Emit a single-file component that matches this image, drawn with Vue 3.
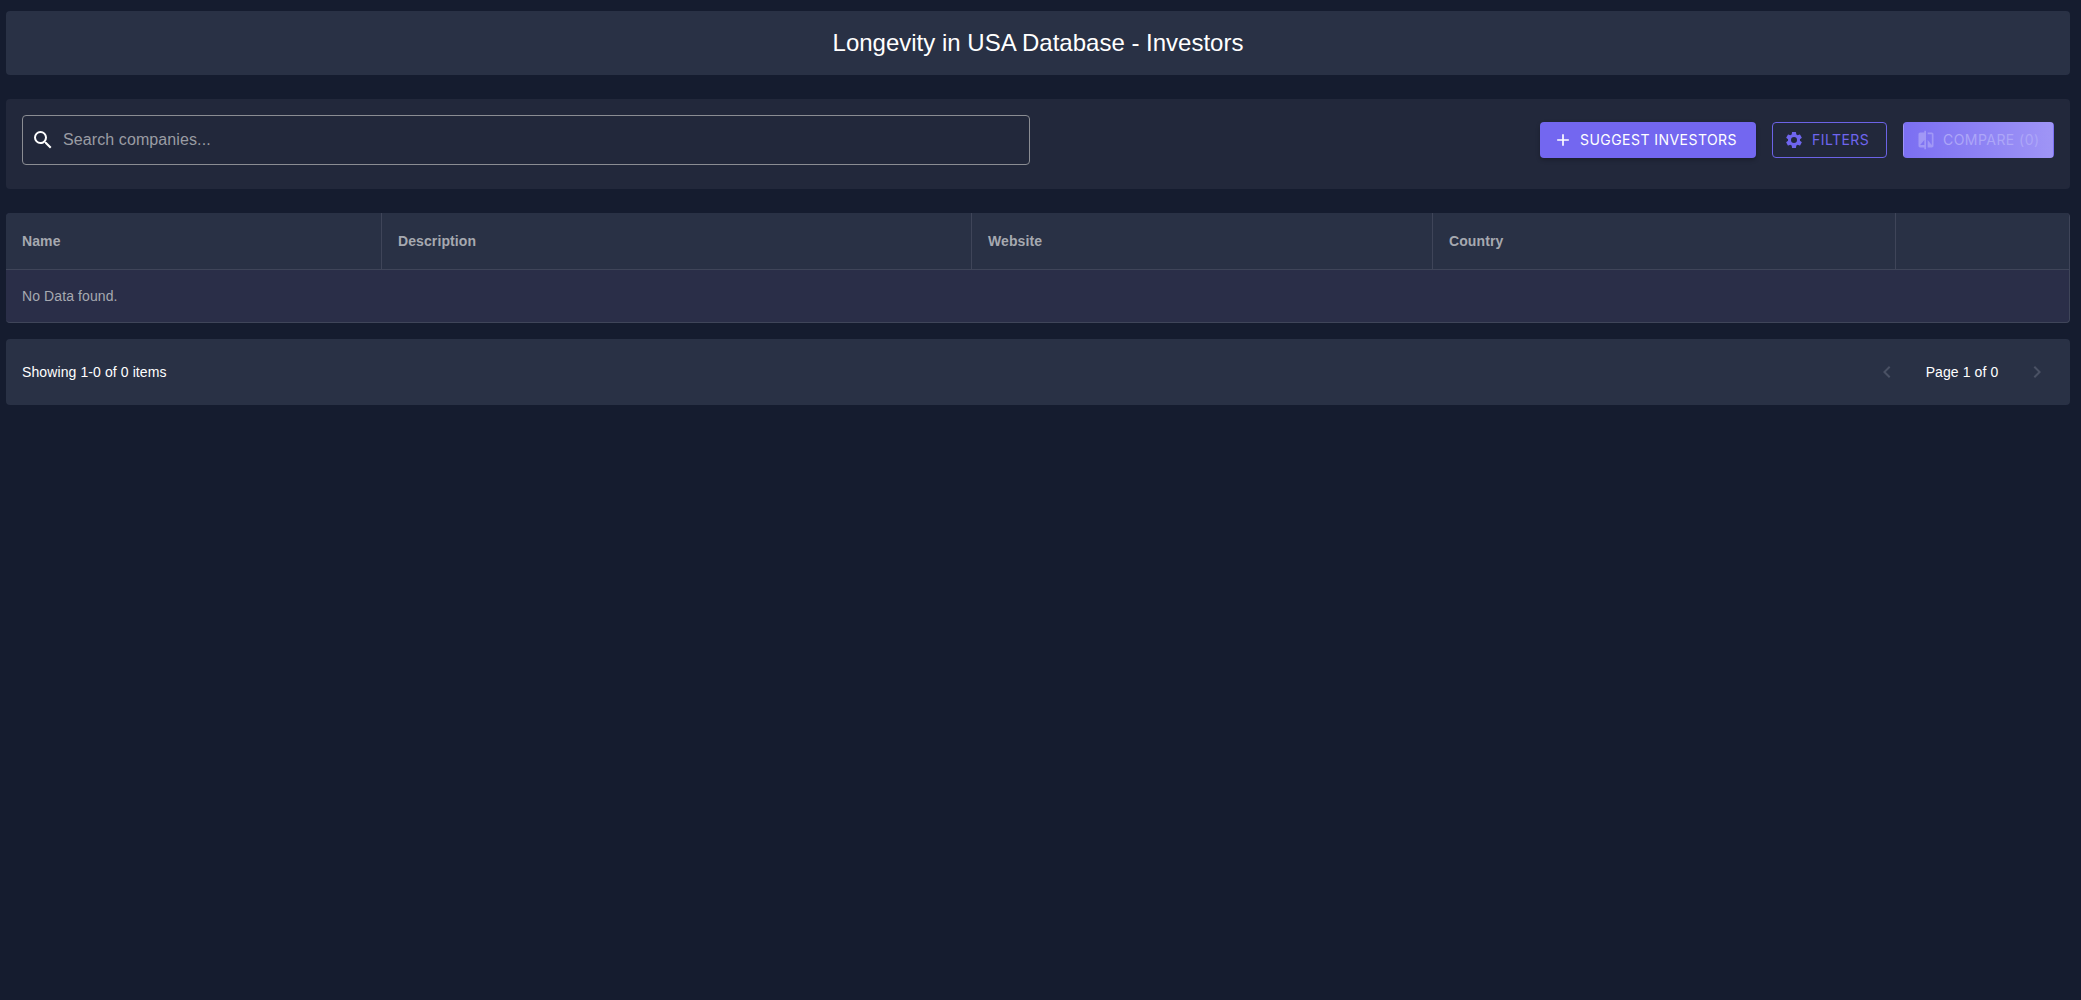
<script setup>
const columns = [
  { label: 'Name' },
  { label: 'Description' },
  { label: 'Website' },
  { label: 'Country' },
  { label: '' }
]
const gridColumns = '376px 590px 461px 463px 1fr'
</script>

<template>
  <div class="page">
    <header class="title-bar"><h1>Longevity in USA Database - Investors</h1></header>

    <section class="toolbar">
      <label class="search">
        <svg viewBox="0 0 24 24" class="search-icon"><path d="M15.5 14h-.79l-.28-.27A6.47 6.47 0 0 0 16 9.5 6.5 6.5 0 1 0 9.5 16c1.61 0 3.09-.59 4.23-1.57l.27.28v.79l5 4.99L20.49 19l-4.99-5zm-6 0C7.01 14 5 11.99 5 9.5S7.01 5 9.5 5 14 7.01 14 9.5 11.99 14 9.5 14z"/></svg>
        <input type="text" placeholder="Search companies..." />
      </label>
      <div class="actions">
        <button class="btn primary">
          <svg viewBox="0 0 24 24" class="btn-icon"><path d="M19 13h-6v6h-2v-6H5v-2h6V5h2v6h6v2z"/></svg>
          <span>SUGGEST INVESTORS</span>
        </button>
        <button class="btn outline">
          <svg viewBox="0 0 24 24" class="btn-icon"><path d="M19.14 12.94c.04-.3.06-.61.06-.94 0-.32-.02-.64-.07-.94l2.03-1.58a.49.49 0 0 0 .12-.61l-1.92-3.32a.488.488 0 0 0-.59-.22l-2.39.96c-.5-.38-1.03-.7-1.62-.94l-.36-2.54a.484.484 0 0 0-.48-.41h-3.84c-.24 0-.43.17-.47.41l-.36 2.54c-.59.24-1.13.57-1.62.94l-2.39-.96c-.22-.08-.47 0-.59.22L2.74 8.87c-.12.21-.08.47.12.61l2.03 1.58c-.05.3-.09.63-.09.94s.02.64.07.94l-2.03 1.58a.49.49 0 0 0-.12.61l1.92 3.32c.12.22.37.29.59.22l2.39-.96c.5.38 1.03.7 1.62.94l.36 2.54c.05.24.24.41.48.41h3.84c.24 0 .44-.17.47-.41l.36-2.54c.59-.24 1.13-.56 1.62-.94l2.39.96c.22.08.47 0 .59-.22l1.92-3.32c.12-.22.07-.47-.12-.61l-2.01-1.58zM12 15.6A3.6 3.6 0 1 1 12 8.4a3.6 3.6 0 0 1 0 7.2z"/></svg>
          <span>FILTERS</span>
        </button>
        <button class="btn disabled">
          <svg viewBox="0 0 24 24" class="btn-icon"><path d="M10 3H5c-1.1 0-2 .9-2 2v14c0 1.1.9 2 2 2h5v2h2V1h-2v2zm0 15H5l5-6v6zm9-15h-5v2h5v13l-5-6v9h5c1.1 0 2-.9 2-2V5c0-1.1-.9-2-2-2z"/></svg>
          <span>COMPARE (0)</span>
        </button>
      </div>
    </section>

    <section class="table">
      <div class="thead" :style="{ gridTemplateColumns: gridColumns }">
        <div v-for="c in columns" :key="c.label" class="th">{{ c.label }}</div>
      </div>
      <div class="empty">No Data found.</div>
    </section>

    <footer class="pager">
      <span>Showing 1-0 of 0 items</span>
      <div class="pages">
        <svg viewBox="0 0 24 24" class="chev"><path d="M15.41 7.41 14 6l-6 6 6 6 1.41-1.41L10.83 12z"/></svg>
        <span class="page-label">Page 1 of 0</span>
        <svg viewBox="0 0 24 24" class="chev"><path d="M10 6 8.59 7.41 13.17 12l-4.58 4.59L10 18l6-6z"/></svg>
      </div>
    </footer>
  </div>
</template>

<style>
html, body { background: #151c2f; }
</style>

<style scoped>
.page {
  box-sizing: border-box;
  min-height: 100vh;
  width: 100%;
  padding: 11px 11px 0 6px;
  background: #151c2f;
  font-family: "Liberation Sans", Arial, sans-serif;
  color: #fff;
}
.title-bar {
  height: 64px;
  display: flex;
  align-items: center;
  justify-content: center;
  background: #293145;
  border-radius: 4px;
}
h1 { margin: 0; font-size: 24px; font-weight: 400; }
.toolbar {
  margin-top: 24px;
  height: 90px;
  padding: 16px;
  box-sizing: border-box;
  display: flex;
  justify-content: space-between;
  align-items: flex-start;
  background: #22283b;
  border-radius: 4px;
}
.search {
  box-sizing: border-box;
  width: 1008px;
  height: 50px;
  display: flex;
  align-items: center;
  padding: 0 8px;
  gap: 8px;
  border: 1px solid #8b8d93;
  border-radius: 4px;
}
.search-icon { width: 24px; height: 24px; fill: #fff; flex: none; }
.search input {
  flex: 1;
  padding: 0;
  border: 0;
  outline: 0;
  background: transparent;
  color: #fff;
  font: 16px "Liberation Sans", Arial, sans-serif;
  letter-spacing: .1px;
}
.search input::placeholder { color: #9a9ca3; opacity: 1; }
.actions { display: flex; gap: 16px; height: 50px; align-items: center; }
.btn {
  box-sizing: border-box;
  height: 36px;
  display: inline-flex;
  align-items: center;
  gap: 7px;
  padding: 0 16px 0 12px;
  border: 1px solid transparent;
  border-radius: 4px;
  font: 400 14px Inter, Arial, sans-serif;
  letter-spacing: .45px;
  white-space: nowrap;
}
.btn span { margin-top: -2px; }
.btn-icon { width: 20px; height: 20px; fill: currentColor; flex: none; }
.primary { width: 216px; background: #7367f0; color: #fff; box-shadow: 0 2px 4px rgba(0,0,0,.25); }
.outline { width: 115px; background: transparent; border-color: #6c63e6; color: #6f65ee; padding-left: 11px; gap: 8px; }
.disabled { width: 151px; background: linear-gradient(90deg, #7b6ff2, #9f95f6); color: #ada6f8; }
.disabled .btn-icon { fill: #a198f6; }
.table {
  margin-top: 24px;
  background: #2a2e48;
  border-radius: 4px;
  border-right: 1px solid #3f4559;
  border-bottom: 1px solid #3f4559;
  overflow: hidden;
  font-size: 14px;
  letter-spacing: .1px;
}
.thead { display: grid; height: 57px; background: #293145; border-bottom: 1px solid #3f4559; box-sizing: border-box; }
.th {
  display: flex;
  align-items: center;
  padding-left: 16px;
  font-weight: 700;
  color: #a6a9b0;
  border-right: 1px solid #3f4559;
}
.th:last-child { border-right: 0; }
.empty { height: 52px; display: flex; align-items: center; padding-left: 16px; color: #a6a9b0; }
.pager {
  margin-top: 16px;
  height: 66px;
  padding: 0 21px 0 16px;
  box-sizing: border-box;
  display: flex;
  justify-content: space-between;
  align-items: center;
  background: #293145;
  border-radius: 4px;
  font-size: 14px;
  letter-spacing: .1px;
}
.pages { display: flex; align-items: center; }
.chev { width: 24px; height: 24px; fill: #4a5164; }
.page-label { width: 126px; text-align: center; }
</style>
